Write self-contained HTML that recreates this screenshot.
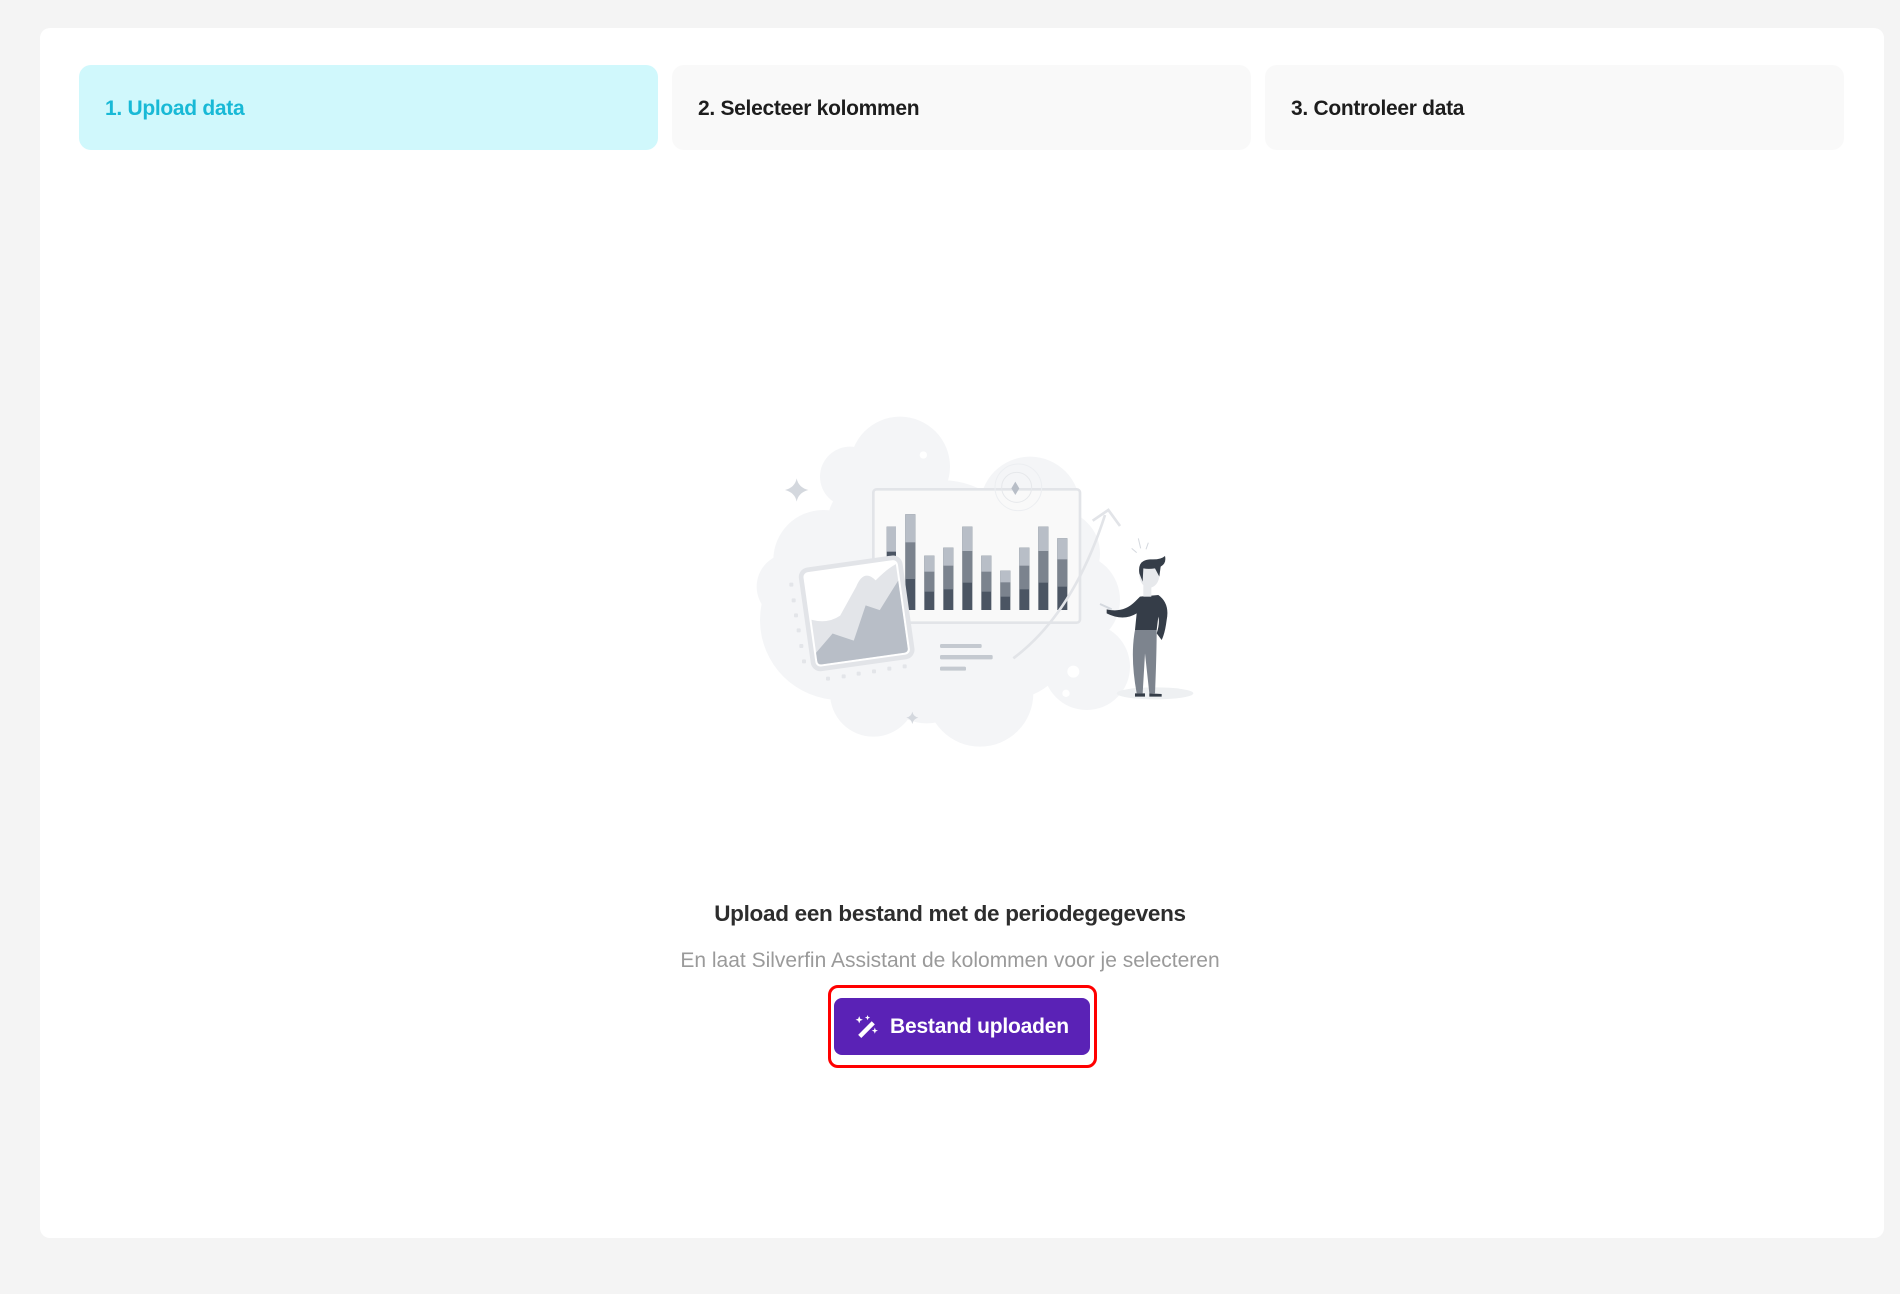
<!DOCTYPE html>
<html><head><meta charset="utf-8"><style>
*{margin:0;padding:0;box-sizing:border-box}
body{width:1900px;height:1294px;background:#f4f4f4;font-family:"Liberation Sans",sans-serif;position:relative;overflow:hidden}
.card{position:absolute;left:40px;top:28px;width:1844px;height:1210px;background:#fff;border-radius:10px}
.tab{position:absolute;top:65px;height:85px;width:579px;border-radius:12px;background:#f9f9f9;font-weight:bold;font-size:21px;color:#1d1d1d;padding-left:26px;line-height:87px;letter-spacing:-0.3px}
.t1{left:79px;background:#d0f8fc;color:#18b9d6}
.t2{left:672px}.t3{left:1265px}
.h{position:absolute;left:0;width:1900px;text-align:center}
.h1{top:901px;font-size:22.5px;font-weight:bold;color:#2d2d2d;letter-spacing:-0.3px}
.h2{top:949px;font-size:21px;color:#9a9a9a;letter-spacing:0px}
.outline{position:absolute;left:828px;top:985px;width:269px;height:83px;border:3px solid #f00;border-radius:10px}
.btn{position:absolute;left:834px;top:998px;width:256px;height:57px;background:#5a22b6;border-radius:8px;color:#fff;font-weight:bold;font-size:21px;line-height:57px;padding-left:56px;letter-spacing:-0.2px}
.btn svg{position:absolute;left:20px;top:16px}
</style></head><body>
<div class="card"></div>
<div class="tab t1">1. Upload data</div>
<div class="tab t2">2. Selecteer kolommen</div>
<div class="tab t3">3. Controleer data</div>

<svg style="position:absolute;left:740px;top:400px" width="470" height="360" viewBox="0 0 1410 1080">
<g fill="#f4f5f7">
<circle cx="480" cy="200" r="150"/><circle cx="330" cy="230" r="90"/><circle cx="870" cy="320" r="150"/>
<circle cx="300" cy="660" r="240"/><circle cx="250" cy="480" r="150"/><circle cx="600" cy="520" r="280"/>
<circle cx="720" cy="880" r="160"/><circle cx="1000" cy="600" r="140"/><circle cx="1040" cy="800" r="130"/>
<circle cx="400" cy="880" r="130"/><circle cx="150" cy="560" r="100"/>
<circle cx="420" cy="380" r="160"/><circle cx="800" cy="700" r="200"/><circle cx="950" cy="460" r="130"/>
<circle cx="560" cy="820" r="150"/>
</g>
<circle cx="550" cy="165" r="11" fill="#fff"/>
<circle cx="1000" cy="815" r="18" fill="#fff"/><circle cx="978" cy="880" r="11" fill="#fff"/>
<path d="M170 235 Q175 262 205 270 Q175 278 170 305 Q165 278 135 270 Q165 262 170 235Z" fill="#d4d8de"/>
<path d="M517 935 Q520 950 535 953 Q520 957 517 972 Q514 957 499 953 Q514 950 517 935Z" fill="#d4d8de"/>
<ellipse cx="1245" cy="880" rx="115" ry="18" fill="#eef0f2"/>
<rect x="400" y="268" width="620" height="400" rx="10" fill="#f9f9f9" stroke="#e2e4e8" stroke-width="8"/>
<circle cx="835" cy="262" r="70" fill="none" stroke="#eceef1" stroke-width="3"/>
<circle cx="830" cy="262" r="45" fill="none" stroke="#e6e8eb" stroke-width="3"/>
<path d="M826 245 L838 265 L826 285 L814 265Z" fill="#b8bec7"/>
<g>
<rect x="440" y="380" width="28" height="250" fill="#4b5563"/><rect x="440" y="380" width="28" height="75" fill="#b8bec7"/>
<rect x="496" y="343" width="30" height="287" fill="#4b5563"/><rect x="496" y="343" width="30" height="194" fill="#7b838e"/><rect x="496" y="343" width="30" height="84" fill="#b8bec7"/>
<rect x="553" y="467" width="30" height="163" fill="#4b5563"/><rect x="553" y="467" width="30" height="108" fill="#7b838e"/><rect x="553" y="467" width="30" height="48" fill="#b8bec7"/>
<rect x="610" y="443" width="30" height="187" fill="#4b5563"/><rect x="610" y="443" width="30" height="125" fill="#7b838e"/><rect x="610" y="443" width="30" height="54" fill="#b8bec7"/>
<rect x="667" y="380" width="30" height="250" fill="#4b5563"/><rect x="667" y="380" width="30" height="168" fill="#7b838e"/><rect x="667" y="380" width="30" height="73" fill="#b8bec7"/>
<rect x="724" y="467" width="30" height="163" fill="#4b5563"/><rect x="724" y="467" width="30" height="108" fill="#7b838e"/><rect x="724" y="467" width="30" height="48" fill="#b8bec7"/>
<rect x="781" y="512" width="30" height="118" fill="#4b5563"/><rect x="781" y="512" width="30" height="78" fill="#7b838e"/><rect x="781" y="512" width="30" height="35" fill="#b8bec7"/>
<rect x="838" y="443" width="30" height="187" fill="#4b5563"/><rect x="838" y="443" width="30" height="125" fill="#7b838e"/><rect x="838" y="443" width="30" height="54" fill="#b8bec7"/>
<rect x="895" y="380" width="30" height="250" fill="#4b5563"/><rect x="895" y="380" width="30" height="168" fill="#7b838e"/><rect x="895" y="380" width="30" height="73" fill="#b8bec7"/>
<rect x="952" y="415" width="30" height="215" fill="#4b5563"/><rect x="952" y="415" width="30" height="145" fill="#7b838e"/><rect x="952" y="415" width="30" height="63" fill="#b8bec7"/>
</g>
<g fill="#c4c9d0"><rect x="600" y="732" width="125" height="12" rx="4"/><rect x="600" y="765" width="158" height="13" rx="4"/><rect x="600" y="800" width="78" height="12" rx="4"/></g>
<path d="M820 775 Q1000 640 1095 345" fill="none" stroke="#e2e4e8" stroke-width="8"/>
<path d="M1058 362 L1105 330 L1140 378" fill="none" stroke="#e2e4e8" stroke-width="8"/>
<g fill="#e3e5e9">
<rect x="148" y="548" width="12" height="12" rx="3"/><rect x="155" y="595" width="12" height="12" rx="3"/><rect x="162" y="640" width="12" height="12" rx="3"/>
<rect x="170" y="685" width="12" height="12" rx="3"/><rect x="178" y="732" width="12" height="12" rx="3"/><rect x="186" y="778" width="12" height="12" rx="3"/>
<rect x="258" y="830" width="12" height="12" rx="3"/><rect x="305" y="823" width="12" height="12" rx="3"/><rect x="350" y="815" width="12" height="12" rx="3"/>
<rect x="396" y="808" width="12" height="12" rx="3"/><rect x="442" y="800" width="12" height="12" rx="3"/><rect x="488" y="793" width="12" height="12" rx="3"/>
</g>
<g transform="rotate(-8 350 640)">
<rect x="200" y="490" width="300" height="300" rx="22" fill="#fff" stroke="#e2e4e8" stroke-width="14"/>
<path d="M213 640 Q260 660 300 640 L360 560 Q390 510 420 550 Q460 520 487 510 L487 765 Q487 777 475 777 L225 777 Q213 777 213 765Z" fill="#e3e5e9"/>
<path d="M213 740 L270 690 L330 720 L380 620 L420 640 L487 560 L487 765 Q487 777 475 777 L225 777 Q213 777 213 765Z" fill="#b8bec7"/>
</g>
<path d="M1080 612 L1115 628" stroke="#d4d8de" stroke-width="6"/>
<path d="M1100 628 Q1150 640 1185 605 L1200 590 L1255 585 Q1290 610 1280 660 Q1275 700 1265 720 L1250 700 Q1260 670 1255 650 L1250 690 L1185 690 L1190 640 Q1150 665 1100 640Z" fill="#353d48"/>
<path d="M1185 690 L1250 690 Q1250 760 1245 880 L1228 880 L1215 760 L1208 880 L1190 880 Q1170 770 1185 690Z" fill="#7d848e"/>
<path d="M1185 880 L1215 880 L1215 890 L1185 890Z M1228 880 L1265 882 L1265 890 L1228 890Z" fill="#353d48"/>
<rect x="1210" y="555" width="24" height="35" fill="#e7e9ec"/>
<ellipse cx="1228" cy="525" rx="30" ry="38" fill="#e7e9ec"/>
<path d="M1198 520 Q1192 480 1230 478 Q1262 480 1275 468 Q1280 490 1262 500 L1258 530 L1245 505 Q1225 508 1210 505 L1208 545 Z" fill="#353d48"/>
<path d="M1195 415 L1202 445 M1225 428 L1218 448 M1175 445 L1190 458" stroke="#d4d8de" stroke-width="3"/>
</svg>

<div class="h h1">Upload een bestand met de periodegegevens</div>
<div class="h h2">En laat Silverfin Assistant de kolommen voor je selecteren</div>
<div class="outline"></div>
<div class="btn"><svg width="25" height="25" viewBox="0 0 24 24" fill="#fff"><path d="M17 7 L20 10 L7 23 L4 20Z"/><path d="M5 2 L6 4.5 L8.5 5.5 L6 6.5 L5 9 L4 6.5 L1.5 5.5 L4 4.5Z"/><path d="M13 1 L13.7 2.8 L15.5 3.5 L13.7 4.2 L13 6 L12.3 4.2 L10.5 3.5 L12.3 2.8Z"/><path d="M20 13 L20.8 15.2 L23 16 L20.8 16.8 L20 19 L19.2 16.8 L17 16 L19.2 15.2Z"/></svg>Bestand uploaden</div>
</body></html>
